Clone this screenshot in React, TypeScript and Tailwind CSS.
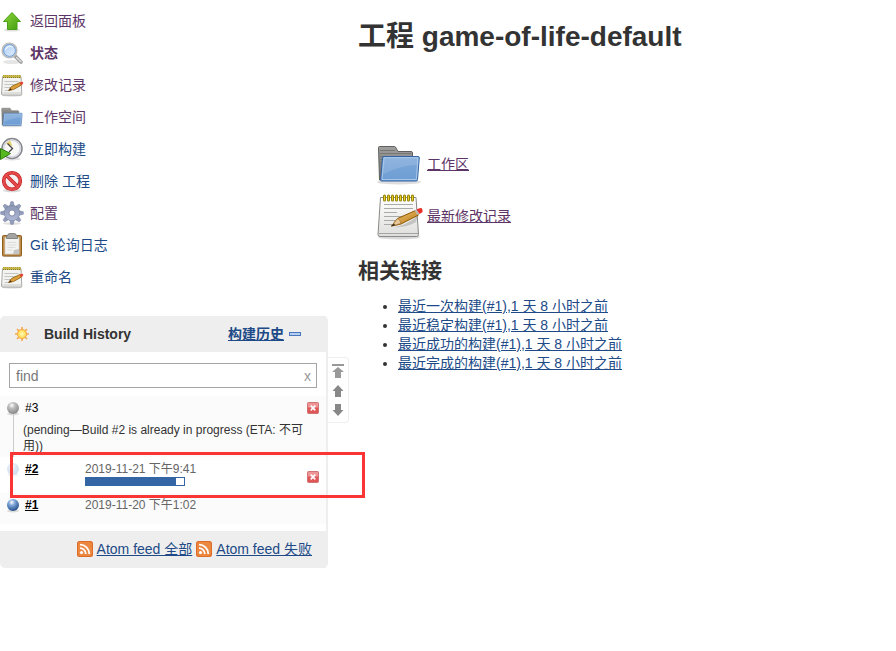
import type { ReactNode } from "react";

function UpArrow() {
  return (
    <svg viewBox="0 0 24 24" className="size-6 shrink-0">
      <defs>
        <linearGradient id="up" x1="0" y1="0" x2="1" y2="1">
          <stop offset="0" stopColor="#8fd83a" />
          <stop offset="1" stopColor="#3f9a10" />
        </linearGradient>
      </defs>
      <ellipse cx="12" cy="21" rx="8" ry="1.6" fill="#000" opacity=".12" />
      <path d="M12 3.500 20.500 12.500H17v8H7.500v-8H3.500z" fill="url(#up)" stroke="#4aa015" strokeLinejoin="round" />
    </svg>
  );
}

function Magnifier() {
  return (
    <svg viewBox="0 0 24 24" className="size-6 shrink-0">
      <defs>
        <linearGradient id="lens" x1="0" y1="0" x2="1" y2="1">
          <stop offset="0" stopColor="#a4c8f2" />
          <stop offset="1" stopColor="#e9f3fe" />
        </linearGradient>
      </defs>
      <ellipse cx="12" cy="21" rx="9" ry="2" fill="#000" opacity=".1" />
      <path d="m15.500 15.500 5.500 5.500" stroke="#9a9a9a" strokeWidth="3.600" strokeLinecap="round" />
      <path d="m16.500 16.500 4.500 4.200" stroke="#dedede" strokeWidth="1.500" strokeLinecap="round" />
      <circle cx="9.500" cy="9.500" r="7.200" fill="url(#lens)" stroke="#bcbebc" strokeWidth="1.800" />
      <circle cx="9.500" cy="9.500" r="5.900" fill="none" stroke="#6f9cd8" strokeWidth="1" />
      <path d="M5.500 9a4.500 4.500 0 0 1 7-3" stroke="#fff" strokeWidth="1.300" fill="none" opacity=".7" />
    </svg>
  );
}

function SmallNotepad() {
  return (
    <svg viewBox="0 0 24 24" className="size-6 shrink-0">
      <ellipse cx="12" cy="22.500" rx="10" ry="1" fill="#000" opacity=".15" />
      <path d="M2.500 3.500h18.500l.8 17.500q0 1-1 1H2.500q-1 0-1-1z" fill="#f3f3f1" stroke="#9fa09c" strokeWidth=".9" />
      <path d="M2 20h19.500" stroke="#c9c9c6" />
      <path d="M4.500 8.500h14M4.500 11.500h12M4.500 14.500h7M4.500 17.500h5" stroke="#c2c4c0" />
      <path d="M3 3.500h18" stroke="#8a7a12" strokeWidth="3" strokeDasharray="1.500 .5" />
      <path d="M3 3.300h18" stroke="#d8c43a" strokeWidth="1.600" strokeDasharray="1.500 .5" />
      <path d="m8.500 17.500 3-4 8.500-4 1.500 2.500-8 4.500z" fill="#dda13c" stroke="#8f5902" strokeWidth=".8" strokeLinejoin="round" />
      <path d="m8.500 17.500 2-2.500 1.300 2z" fill="#4d3a1c" />
      <path d="m19.500 9.700 1.600 2.500 1.900-1.100q.8-1.300-.6-2.300-1-.3-2.900.9z" fill="#e2452f" />
    </svg>
  );
}

function Notepad() {
  return (
    <svg viewBox="0 0 48 48" className="size-12">
      <defs>
        <linearGradient id="paper" x1="0" y1="0" x2="0" y2="1">
          <stop offset="0" stopColor="#fff" />
          <stop offset="1" stopColor="#dededc" />
        </linearGradient>
        <linearGradient id="wood" x1="0" y1="0" x2="1" y2="1">
          <stop offset="0" stopColor="#f3c878" />
          <stop offset="1" stopColor="#b5740f" />
        </linearGradient>
      </defs>
      <ellipse cx="24" cy="45" rx="21" ry="2.500" fill="#000" opacity=".15" />
      <path d="M5.500 5.500h35.500L43.500 42.500q0 2-2 2H5q-2 0-2-2z" fill="url(#paper)" stroke="#888a85" />
      <path d="M4 41.500h39" stroke="#a5a5a2" />
      <path d="M9 12.500h29M9 16.500h29M9 20.500h13M9 24.500h22M9 28.500h19M9 32.500h12" stroke="#a9aba8" />
      <path d="M9.500 4v4M13.500 4v4M17.500 4v4M21.500 4v4M25.500 4v4M29.500 4v4M33.500 4v4M37.500 4v4" stroke="#8f7c00" strokeWidth="3" strokeLinecap="round" />
      <path d="M9.500 4v4M13.500 4v4M17.500 4v4M21.500 4v4M25.500 4v4M29.500 4v4M33.500 4v4M37.500 4v4" stroke="#e6cf2c" strokeWidth="1.200" strokeLinecap="round" />
      <path d="M19 35q12-1 24-12l-2 7q-9 6-22 5z" fill="#000" opacity=".16" />
      <path d="m16.500 34 6-7.500 18-8 3 4.500-17.500 9z" fill="url(#wood)" stroke="#8f5902" strokeLinejoin="round" />
      <path d="m16.500 34 6-7.500q3 1 3.500 5z" fill="#e9c99a" stroke="#9b6b28" strokeWidth=".7" />
      <path d="m16 34.500 3-3 1 1.800z" fill="#222" />
      <path d="m39.500 18.500 3 4.500 2-1-3-4.500z" fill="#b9bbb7" />
      <path d="m41.500 17.500 3 4.500 2.500-1.500q1.500-2-.5-4.500-2-.5-5 1.500z" fill="#e83128" />
    </svg>
  );
}

function Folder({ className }: { className: string }) {
  return (
    <svg viewBox="0 0 48 48" className={className}>
      <defs>
        <linearGradient id="folder" x1="0" y1="0" x2="0" y2="1">
          <stop offset="0" stopColor="#7fa9da" />
          <stop offset="1" stopColor="#6d9dd3" />
        </linearGradient>
        <linearGradient id="folderBack" x1="0" y1="0" x2="0" y2="1">
          <stop offset="0" stopColor="#a0a09e" />
          <stop offset="1" stopColor="#6b6b69" />
        </linearGradient>
      </defs>
      <ellipse cx="24" cy="42" rx="22" ry="2.500" fill="#000" opacity=".13" />
      <path d="M3.500 7.500q0-1 1-1h15q1 0 1.500 1.500l2 3.500h13q1.500 0 1.500 1.500v27H4.500z" fill="url(#folderBack)" stroke="#5f5f5d" />
      <path d="M5 10.500h15M5 13.500h31M5 16.500h31M5 19.500h4M5 22.500h4M5 25.500h3M5 28.500h3M5 31.500h3M5 34.500h3" stroke="#777775" />
      <path d="M9 16.500h34q1.500 0 1.300 1.500L42.500 39.500q0 1.500-1.500 1.500H6.500q-1 0-.8-1.500L7.500 18q0-1.500 1.500-1.500z" fill="url(#folder)" stroke="#3465a4" />
      <path d="M9 17.700h34L41.300 39.500H7z" fill="none" stroke="#b8d2ee" strokeWidth=".8" />
      <path d="M9 18h34l-.8 7q-16 0-34 9z" fill="#fff" opacity=".13" />
    </svg>
  );
}

function ClockPlay() {
  return (
    <svg viewBox="0 0 24 24" className="size-6 shrink-0">
      <ellipse cx="12" cy="22" rx="9" ry="1.500" fill="#000" opacity=".12" />
      <circle cx="12" cy="11.500" r="10" fill="#f8f8f6" stroke="#85868c" strokeWidth="1.500" />
      <circle cx="12" cy="11.500" r="8.300" fill="none" stroke="#d6d6e0" strokeWidth="1.500" />
      <path d="M6 6.500 10 3.500 12.500 9z" fill="#e8d469" />
      <path d="m7.500 6.500 5 5-3.500 3.500" fill="none" stroke="#444" strokeWidth="1.300" />
      <path d="M.5 11.500 10.500 16.500 .5 22.500z" fill="#55b91f" stroke="#2f7d0c" />
    </svg>
  );
}

function Forbidden() {
  return (
    <svg viewBox="0 0 24 24" className="size-6 shrink-0">
      <ellipse cx="12" cy="21.500" rx="9" ry="1.800" fill="#000" opacity=".15" />
      <circle cx="12" cy="12" r="8.300" fill="#f6f0f0" stroke="#c02020" strokeWidth="3.600" />
      <path d="m6.500 6.500 11 11" stroke="#c02020" strokeWidth="3.600" />
      <circle cx="12" cy="12" r="8.300" fill="none" stroke="#e64a4a" strokeWidth="2.200" />
      <path d="m6.500 6.500 11 11" stroke="#e64a4a" strokeWidth="2.200" />
    </svg>
  );
}

const TEETH = [0, 45, 90, 135, 180, 225, 270, 315];

function Gear() {
  return (
    <svg viewBox="0 0 24 24" className="size-6 shrink-0">
      <defs>
        <linearGradient id="gear" gradientUnits="userSpaceOnUse" x1="0" y1="3" x2="0" y2="21">
          <stop offset="0" stopColor="#8793b0" />
          <stop offset="1" stopColor="#b3bbda" />
        </linearGradient>
      </defs>
      <ellipse cx="12" cy="22.500" rx="9" ry="1.300" fill="#000" opacity=".12" />
      {TEETH.map((angle) => (
        <path key={angle} d="M9.800 5 10.800.7h2.400L14.200 5z" fill="#949fbe" stroke="#76829f" strokeWidth=".6" transform={`rotate(${angle} 12 12)`} />
      ))}
      <circle cx="12" cy="12" r="8" fill="#7885a4" />
      <circle cx="12" cy="12" r="7.500" fill="url(#gear)" />
      <circle cx="12" cy="12" r="3" fill="#fff" stroke="#76829f" strokeWidth=".8" />
    </svg>
  );
}

function Clipboard() {
  return (
    <svg viewBox="0 0 24 24" className="size-6 shrink-0">
      <ellipse cx="12" cy="23.300" rx="10" ry=".7" fill="#000" opacity=".2" />
      <rect x="2.500" y="2.500" width="19" height="20.500" rx="1" fill="#bd8a48" stroke="#8f5f20" />
      <path d="M5 4.500h14v16.500H5z" fill="#f3f3f2" stroke="#d4d4d2" strokeWidth=".7" />
      <path d="M7.500 9.500h9M7.500 12h9M7.500 14.500h8M7.500 17h5" stroke="#dcdcda" />
      <path d="m13 21 1-4 5-1v5z" fill="#c4c4c2" />
      <path d="M8 2q0-1.500 1.500-1.500h5Q16 .500 16 2l1.500 1v2.500h-11V3z" fill="#a4a5a2" stroke="#747572" strokeWidth=".8" />
    </svg>
  );
}

function Sun() {
  return (
    <svg viewBox="0 0 16 16" className="size-4 shrink-0">
      <defs>
        <radialGradient id="sun">
          <stop offset="0" stopColor="#fffbc0" />
          <stop offset="1" stopColor="#ffd53c" />
        </radialGradient>
      </defs>
      <path d="M8 1v14M1 8h14M3 3l10 10M13 3 3 13" stroke="#f4a94a" strokeWidth="1.600" />
      <circle cx="8" cy="8" r="4.600" fill="url(#sun)" stroke="#f2a94a" strokeWidth="1" />
    </svg>
  );
}

function Ball({ id, light, dark, faded = false }: { id: string; light: string; dark: string; faded?: boolean }) {
  return (
    <svg viewBox="0 0 16 16" className={faded ? "size-4 opacity-35" : "size-4"}>
      <defs>
        <radialGradient id={id} cx=".4" cy=".28" r=".75">
          <stop offset="0" stopColor="#fff" />
          <stop offset=".35" stopColor={light} />
          <stop offset="1" stopColor={dark} />
        </radialGradient>
      </defs>
      <ellipse cx="8" cy="14" rx="6" ry="1.500" fill="#000" opacity=".12" />
      <circle cx="8" cy="8" r="6" fill={`url(#${id})`} />
    </svg>
  );
}

function Rss() {
  return (
    <svg viewBox="0 0 16 16" className="size-4 shrink-0">
      <rect width="16" height="16" rx="2.500" fill="#dd6c28" />
      <rect x="1" y="1" width="14" height="14" rx="2" fill="#ec8740" />
      <circle cx="4.500" cy="11.500" r="1.600" fill="#fff" />
      <path d="M3 7.200a5.800 5.800 0 0 1 5.800 5.800M3 3.700a9.300 9.300 0 0 1 9.300 9.300" fill="none" stroke="#fff" strokeWidth="1.800" />
    </svg>
  );
}

function StopButton({ label }: { label: string }) {
  return (
    <button type="button" aria-label={label} className="block size-3">
      <svg viewBox="0 0 12 12" className="size-3">
        <rect x=".5" y=".5" width="11" height="11" rx="1" fill="#e05555" stroke="#cf7474" />
        <rect x="1" y="1" width="10" height="4.500" fill="#f3b0b0" opacity=".7" />
        <path d="m3.700 3.700 4.600 4.600m0-4.600-4.600 4.600" stroke="#fff" strokeWidth="1.700" />
      </svg>
    </button>
  );
}

type Task = { label: string; icon: ReactNode; visited?: boolean; current?: boolean };

const TASKS: Task[] = [
  { label: "返回面板", icon: <UpArrow />, visited: true },
  { label: "状态", icon: <Magnifier />, visited: true, current: true },
  { label: "修改记录", icon: <SmallNotepad />, visited: true },
  { label: "工作空间", icon: <Folder className="size-6 shrink-0" />, visited: true },
  { label: "立即构建", icon: <ClockPlay /> },
  { label: "删除 工程", icon: <Forbidden /> },
  { label: "配置", icon: <Gear />, visited: true },
  { label: "Git 轮询日志", icon: <Clipboard /> },
  { label: "重命名", icon: <SmallNotepad /> },
];

const PERMALINKS = [
  "最近一次构建(#1),1 天 8 小时之前",
  "最近稳定构建(#1),1 天 8 小时之前",
  "最近成功的构建(#1),1 天 8 小时之前",
  "最近完成的构建(#1),1 天 8 小时之前",
];

function TaskList() {
  return (
    <nav className="flex flex-col pt-[5px]">
      {TASKS.map((task) => (
        <a key={task.label} href="#" className={`flex h-8 items-center gap-1.5 ${task.visited ? "text-[#5c3566]" : "text-[#204a87]"} ${task.current ? "font-bold" : ""}`}>
          {task.icon}
          {task.label}
        </a>
      ))}
    </nav>
  );
}

function BuildHistory() {
  return (
    <section className="relative mt-[23px] w-[328px] rounded-[5px] border-r-2 border-[#eee]">
      <header className="flex h-9 items-center rounded-tl-[5px] bg-[#eee] pl-3.5">
        <Sun />
        <h2 className="ml-3.5 flex-1 font-bold">Build History</h2>
        <a href="#" className="font-bold text-[#204a87] underline">构建历史</a>
        <button type="button" aria-label="收起" className="mr-[25px] ml-[5px] h-1 w-3 border border-[#4a77bb] bg-[#b4cdf2]" />
      </header>

      <div className="relative mr-[9px] mt-[11px] mb-2 ml-[9px]">
        <input type="text" aria-label="find" placeholder="find" className="block h-[25px] w-full border border-[#a5a5a5] bg-white px-1.5 placeholder:text-[#777]" />
        <button type="button" aria-label="清除" className="absolute top-0 right-1.5 h-[25px] text-[#999]">x</button>
      </div>

      <ol className="text-xs leading-4">
        <li className="relative flex h-[61px] flex-col bg-[#fbfbfb] pt-1">
          <span className="absolute top-[18px] bottom-0 left-[13px] w-px bg-[#ccc]" />
          <div className="flex items-center pl-[5px]">
            <Ball id="ballGrey" light="#bdbdbd" dark="#858585" />
            <span className="ml-1 flex-1 text-black">#3</span>
            <span className="mr-[7px]"><StopButton label="取消 #3" /></span>
          </div>
          <div className="mt-1.5 mr-5 ml-[23px]">(pending—Build #2 is already in progress (ETA: 不可用))</div>
        </li>
        <li className="flex h-9 items-start bg-white pt-1 pl-[5px]">
          <Ball id="ballPale" light="#a9c3e4" dark="#7d9fca" faded />
          <a href="#" className="ml-1 w-[60px] font-bold text-black underline">#2</a>
          <div className="flex-1 text-[#666]">
            2019-11-21 下午9:41
            <div role="progressbar" aria-label="#2" aria-valuenow={92} className="h-[9px] w-[100px] border border-[#3465a4] bg-white">
              <div className="h-full w-[90px] bg-[#3465a4]" />
            </div>
          </div>
          <span className="mt-2.5 mr-[7px]"><StopButton label="终止 #2" /></span>
        </li>
        <li className="flex h-[31px] items-start bg-[#fbfbfb] pt-1 pl-[5px]">
          <Ball id="ballBlue" light="#7ea6d8" dark="#204a87" />
          <a href="#" className="ml-1 w-[60px] font-bold text-black underline">#1</a>
          <span className="text-[#666]">2019-11-20 下午1:02</span>
        </li>
      </ol>

      <footer className="mt-[7px] flex h-[37px] items-center justify-end gap-1 rounded-bl-[5px] bg-[#eee] pr-3.5 pb-0.5">
        <Rss />
        <a href="#" className="text-[#204a87] underline">Atom feed 全部</a>
        <Rss />
        <a href="#" className="text-[#204a87] underline">Atom feed 失败</a>
      </footer>

      <div className="absolute top-[41px] -right-[23px] flex h-[66px] w-[21px] flex-col items-center justify-between rounded-r border border-l-0 border-[#eee] py-1.5 text-[#888]">
        <button type="button" aria-label="最新" className="block">
          <svg viewBox="0 0 12 14" className="block h-3.5 w-3"><path d="M0 0h12v2H0zM6 3l6 5H9v6H3V8H0z" fill="#999" /></svg>
        </button>
        <button type="button" aria-label="上一页" className="block">
          <svg viewBox="0 0 12 12" className="block size-3"><path d="m6 0 5.500 6H9v6H3V6H.5z" fill="currentColor" /></svg>
        </button>
        <button type="button" aria-label="下一页" className="block">
          <svg viewBox="0 0 12 12" className="block size-3"><path d="M6 12 .5 6H3V0h6v6h2.500z" fill="currentColor" /></svg>
        </button>
      </div>

      <div className="pointer-events-none absolute top-[136px] left-[10px] h-[46px] w-[355px] border-3 border-[#fb3434]" />
    </section>
  );
}

export default function App() {
  return (
    <div className="flex items-start bg-white font-['Liberation_Sans','Noto_Sans_CJK_SC',sans-serif] text-sm text-[#333]">
      <aside className="w-[358px] shrink-0">
        <TaskList />
        <BuildHistory />
      </aside>
      <main className="min-w-0 flex-1 pt-[17px]">
        <h1 className="text-[28px] leading-10 font-bold">工程 game-of-life-default</h1>
        <div className="mt-[83px] ml-[17px] flex flex-col items-start gap-1">
          <a href="#" className="flex items-center gap-1 text-[#5c3566] underline">
            <Folder className="size-12" />
            工作区
          </a>
          <a href="#" className="flex items-center gap-1 text-[#5c3566] underline">
            <Notepad />
            最新修改记录
          </a>
        </div>
        <h2 className="mt-4 text-[21px] leading-[30px] font-bold">相关链接</h2>
        <ul className="mt-[11px] list-disc pl-10 leading-[19px]">
          {PERMALINKS.map((label) => (
            <li key={label}>
              <a href="#" className="text-[#204a87] underline">{label}</a>
            </li>
          ))}
        </ul>
      </main>
    </div>
  );
}
